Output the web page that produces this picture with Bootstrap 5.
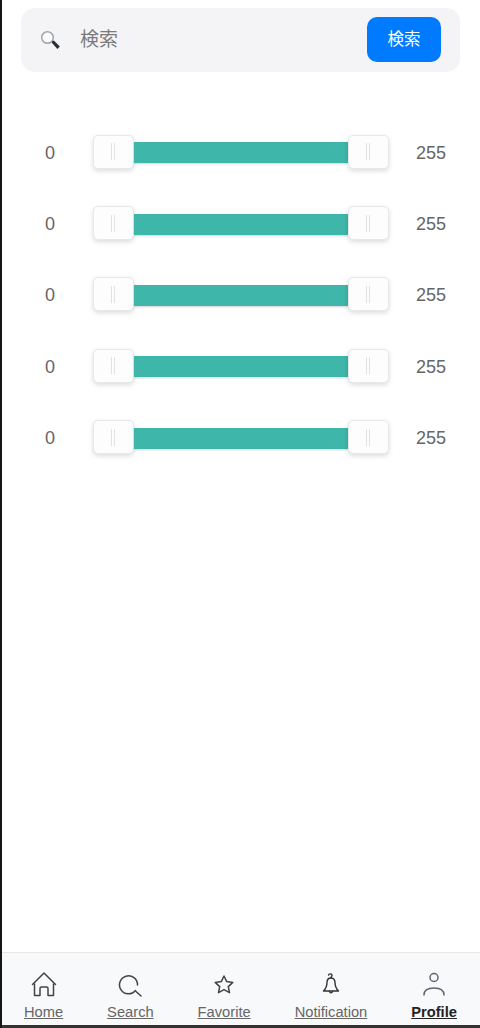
<!DOCTYPE html>
<html lang="ja">
<head>
<meta charset="utf-8">
<meta name="viewport" content="width=device-width, initial-scale=1">
<link rel="stylesheet" href="https://cdn.jsdelivr.net/npm/bootstrap@5.3.0/dist/css/bootstrap.min.css">
<style>
html,body{height:100%}
body{font-family:"Liberation Sans","Noto Sans CJK JP",sans-serif;background:#fff}
.app-frame{height:1028px;border-left:2px solid #151515;overflow:hidden}
.search-panel{margin:8px 20px 0 19px;height:64px;padding:0 19px;background:#f4f4f7;border-radius:14px}
.search-input{margin-left:18px;border:0;background:transparent;font-size:19px;padding:0;box-shadow:none;color:#666;min-width:0}
.search-input:focus{background:transparent;box-shadow:none}
.search-input::placeholder{color:#7b7b7d}
.search-go{width:74px;height:45px;margin-bottom:1px;padding:0;background:#007aff;border:0;border-radius:10px;color:#fff;font-size:16.5px}
.range-list{margin-top:45px;padding:0 5px}
.range-row{height:71.4px}
.range-num{width:86px;flex:none;text-align:center;font-size:18px;color:#666;padding-top:1px}
.range-num:last-child{width:84px}
.range-body{width:296px;flex:none}
.range-fill{height:21px;background:#3eb6aa;box-shadow:0 1px 2px rgba(0,0,0,.18)}
.range-knob{width:41px;height:34px;margin-bottom:2px;background:#fdfdfd;border:1px solid #e8e8e8;border-radius:5px;box-shadow:0 2px 5px rgba(0,0,0,.14)}
.knob-line{width:4px;height:17px;margin-right:1px;border-left:1px solid #e2e2e2;border-right:1px solid #e2e2e2}
.tab-strip{height:76px;padding:18px 1px 0 0;background:#f8f9fb;border-top:1px solid #e8e8e8;border-bottom:3px solid #333}
.tab-link{color:#666;font-size:14.7px;line-height:18px;text-decoration:underline}
.tab-link:hover{color:#666}
.tab-link.is-current{color:#222;font-weight:700}
.tab-glyph{width:28px;height:27px;margin-bottom:5px}
</style>
</head>
<body>
<div class="app-frame d-flex flex-column">
  <form class="search-panel d-flex align-items-center">
    <svg class="flex-shrink-0" width="22" height="22" viewBox="0 0 22 22" aria-hidden="true">
      <circle cx="7.500" cy="8.500" r="5.800" fill="#f9fbfd" stroke="#a3a5a9" stroke-width="1.500"/>
      <path d="M12 12.500l1.800-1 6 6-2.400 2.400-5.600-6.200z" fill="#2b2e33"/>
    </svg>
    <input class="form-control search-input flex-grow-1 rounded-0" type="text" placeholder="検索">
    <button class="btn search-go flex-shrink-0" type="button">検索</button>
  </form>

  <div class="range-list flex-grow-1">
    <div class="range-row d-flex align-items-center"><span class="range-num">0</span><div class="range-body d-flex align-items-center"><div class="range-knob d-flex align-items-center justify-content-center flex-shrink-0"><i class="knob-line"></i></div><div class="range-fill flex-grow-1"></div><div class="range-knob d-flex align-items-center justify-content-center flex-shrink-0"><i class="knob-line"></i></div></div><span class="range-num">255</span></div>
    <div class="range-row d-flex align-items-center"><span class="range-num">0</span><div class="range-body d-flex align-items-center"><div class="range-knob d-flex align-items-center justify-content-center flex-shrink-0"><i class="knob-line"></i></div><div class="range-fill flex-grow-1"></div><div class="range-knob d-flex align-items-center justify-content-center flex-shrink-0"><i class="knob-line"></i></div></div><span class="range-num">255</span></div>
    <div class="range-row d-flex align-items-center"><span class="range-num">0</span><div class="range-body d-flex align-items-center"><div class="range-knob d-flex align-items-center justify-content-center flex-shrink-0"><i class="knob-line"></i></div><div class="range-fill flex-grow-1"></div><div class="range-knob d-flex align-items-center justify-content-center flex-shrink-0"><i class="knob-line"></i></div></div><span class="range-num">255</span></div>
    <div class="range-row d-flex align-items-center"><span class="range-num">0</span><div class="range-body d-flex align-items-center"><div class="range-knob d-flex align-items-center justify-content-center flex-shrink-0"><i class="knob-line"></i></div><div class="range-fill flex-grow-1"></div><div class="range-knob d-flex align-items-center justify-content-center flex-shrink-0"><i class="knob-line"></i></div></div><span class="range-num">255</span></div>
    <div class="range-row d-flex align-items-center"><span class="range-num">0</span><div class="range-body d-flex align-items-center"><div class="range-knob d-flex align-items-center justify-content-center flex-shrink-0"><i class="knob-line"></i></div><div class="range-fill flex-grow-1"></div><div class="range-knob d-flex align-items-center justify-content-center flex-shrink-0"><i class="knob-line"></i></div></div><span class="range-num">255</span></div>
  </div>

  <nav class="tab-strip d-flex justify-content-around align-items-start flex-shrink-0">
    <a class="tab-link d-flex flex-column align-items-center" href="#">
      <svg class="tab-glyph" viewBox="0 0 28 27" fill="none" stroke="#444" stroke-width="1.500" stroke-linecap="round" stroke-linejoin="round"><path d="M2.500 13.500 14 2l11.500 11.500"/><path d="M4.500 13v11.500h5.500V17.500c0-1 .7-1.500 1.500-1.500h5c.8 0 1.500.5 1.500 1.500v7h5.500V13"/></svg>
      <span>Home</span>
    </a>
    <a class="tab-link d-flex flex-column align-items-center" href="#">
      <svg class="tab-glyph" viewBox="0 0 28 27" fill="none" stroke="#444" stroke-width="1.500" stroke-linecap="round"><path d="M19.500 19.500A9 9 0 1 1 21.500 14"/><path d="M20 20.500l5 4.500"/></svg>
      <span>Search</span>
    </a>
    <a class="tab-link d-flex flex-column align-items-center" href="#">
      <svg class="tab-glyph" viewBox="0 0 28 27" fill="none" stroke="#444" stroke-width="1.500" stroke-linejoin="round"><path d="M14 5l2.700 5.600 6.100.8-4.500 4.200 1.200 6.100-5.500-3-5.500 3 1.200-6.100-4.500-4.200 6.100-.8z"/></svg>
      <span>Favorite</span>
    </a>
    <a class="tab-link d-flex flex-column align-items-center" href="#">
      <svg class="tab-glyph" viewBox="0 0 28 27" fill="none" stroke="#333" stroke-width="1.400" stroke-linecap="round" stroke-linejoin="round"><path d="M11.500 4c.5-1.500 3.500-1.500 3.500.3 0 1-1 1.200-1 2.700"/><path d="M14 7c-3 0-4 2-4 4.500 0 4-1 6-3.500 8.500h15c-2.500-2.500-3.500-4.500-3.500-8.500C18 9 17 7 14 7z"/><path d="M12.500 20.500c.3 1.800 2.700 1.800 3 0"/></svg>
      <span>Notification</span>
    </a>
    <a class="tab-link is-current d-flex flex-column align-items-center" href="#">
      <svg class="tab-glyph" viewBox="0 0 28 27" fill="none" stroke="#5f6470" stroke-width="1.500" stroke-linecap="round"><circle cx="14" cy="6.500" r="4"/><path d="M4 24c0-5 4-7 10-7s10 2 10 7"/></svg>
      <span>Profile</span>
    </a>
  </nav>
</div>
<script src="https://cdn.jsdelivr.net/npm/bootstrap@5.3.0/dist/js/bootstrap.bundle.min.js"></script>
</body>
</html>
